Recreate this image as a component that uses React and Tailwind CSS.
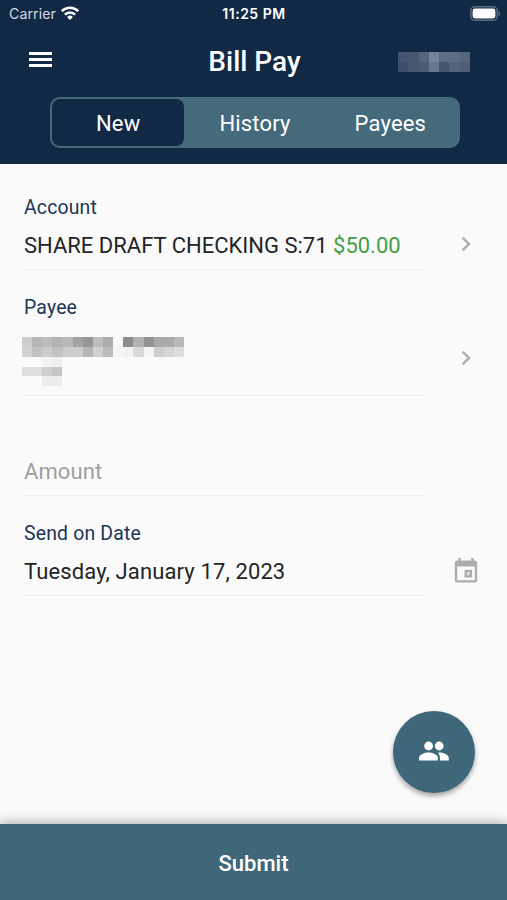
const TABS = ['New', 'History', 'Payees'];

const HEADER_MASK = [
  ['#445570', '#46566f', '#55647b', '#75839a', '#5f6d84', '#5d6b83', '#56647c'],
  ['#3c4e69', '#485872', '#4a5a73', '#68768d', '#44556f', '#53627b', '#4d5d77'],
];

const PAYEE_MASK = [
  ['#cdcdcd', '#b6b6b6', '#bcbcbc', '#b3b3b3', '#bababa', '#a2a2a2', '#969696', '#bdbdbd', '#adadad', '#f8f8f8', '#8d8d8d', '#b2b2b2', '#939393', '#aaaaaa', '#aaaaaa', '#b9b9b9'],
  ['#d2d2d2', '#c2c2c2', '#cccccc', '#c2c2c2', '#cdcdcd', '#cdcdcd', '#b5b5b5', '#d0d0d0', '#bbbbbb', '#f5f5f5', '#f2f2f2', '#dadada', '#f5f5f5', '#cecece', '#d6d6d6', '#dddddd'],
];

const ADDRESS_MASK = [
  ['#fafafa', '#fafafa', '#f2f2f2', '#f0f0f0'],
  ['#dfdfdf', '#dfdfdf', '#d0d0d0', '#c5c5c5'],
  ['#fafafa', '#fafafa', '#ececec', '#ececec'],
];

function Mask({ rows, className = '' }) {
  return (
    <div className={`flex flex-col ${className}`}>
      {rows.map((row, i) => (
        <div key={i} className="flex flex-1">
          {row.map((color, j) => (
            <span key={j} className="flex-1" style={{ backgroundColor: color }} />
          ))}
        </div>
      ))}
    </div>
  );
}

function WifiIcon() {
  return (
    <svg viewBox="0 0 18 14" className="mb-[2px] h-[14px] w-[18px]" fill="none" stroke="#fff" strokeWidth="2.6">
      <path d="M.8 5.2a11.6 11.6 0 0 1 16.4 0" />
      <path d="M3.9 8.6a7.2 7.2 0 0 1 10.2 0" />
      <path d="M9 13.9 6.1 11a4.1 4.1 0 0 1 5.8 0Z" fill="#fff" stroke="none" />
    </svg>
  );
}

function BatteryIcon() {
  return (
    <svg viewBox="0 0 31 15" className="mb-[2px] h-[15px] w-[31px]">
      <rect x="0.8" y="0.8" width="26.4" height="13.4" rx="4" fill="none" stroke="#5d6c85" strokeWidth="1.5" />
      <rect x="2.6" y="2.6" width="22.8" height="9.8" rx="2.4" fill="#fff" />
      <path d="M28.6 5.2c2 .6 2 4 0 4.6Z" fill="#66758d" />
    </svg>
  );
}

function PeopleIcon() {
  return (
    <svg viewBox="0 0 30 20" className="mb-[2px] h-5 w-[30px]" fill="currentColor">
      <circle cx="9.6" cy="5" r="4.4" />
      <circle cx="20.2" cy="5" r="4.4" />
      <path d="M0 19.4v-2.5c0-3.4 6-5.4 9.5-5.4s9.4 2 9.4 5.4v2.5Z" />
      <path d="M19.5 11.6c3.8-.2 10.3 1.8 10.3 5.3v2.5h-8.9v-2.5c0-2.3-.7-3.9-1.9-5.2Z" />
    </svg>
  );
}

function Chevron() {
  return (
    <svg viewBox="0 0 10 16" className="mr-[36.5px] h-4 w-[10px]" fill="none" stroke="#b0b0b0" strokeWidth="2.5">
      <path d="M1.6 1.7 8 8l-6.4 6.3" />
    </svg>
  );
}

function CalendarIcon() {
  return (
    <svg viewBox="0 0 24 25" className="mr-[29.5px] h-[25px] w-6">
      <path
        fill="#acacac"
        fillRule="evenodd"
        d="M4.4 0h2.4v2.6h10.4V0h2.4v2.6h1.2A2.4 2.4 0 0 1 23.2 5v17.2a2.4 2.4 0 0 1-2.4 2.4H3.2a2.4 2.4 0 0 1-2.4-2.4V5a2.4 2.4 0 0 1 2.4-2.4h1.2ZM3.2 8.6v13.6h17.6V8.6Z"
      />
      <rect x="11.6" y="13" width="5.4" height="5.4" fill="#ddd" stroke="#acacac" strokeWidth="2.2" />
    </svg>
  );
}

function Header() {
  return (
    <header className="h-[164px] bg-[#122945] text-white">
      <div className="flex h-7 items-center justify-between pr-[6px] pl-[9px] font-['Inter',sans-serif]">
        <div className="flex w-[120px] items-center gap-[5px]">
          <span className="text-[14.2px] tracking-[0.05px] text-[#d3d9e2]">Carrier</span>
          <WifiIcon />
        </div>
        <span className="pr-[2px] pb-[2px] text-[14px] font-semibold tracking-[0.5px]">11:25 PM</span>
        <div className="flex w-[120px] justify-end">
          <BatteryIcon />
        </div>
      </div>

      <div className="flex h-[69px] items-center justify-between pr-[37px] pb-[2px] pl-[29px]">
        <div className="flex w-[82px] flex-col gap-[3px] pb-[5px]">
          <span className="h-[3px] w-[23px] bg-white" />
          <span className="h-[3px] w-[23px] bg-white" />
          <span className="h-[3px] w-[23px] bg-white" />
        </div>
        <h1 className="text-[28px] font-medium">Bill Pay</h1>
        <Mask rows={HEADER_MASK} className="h-5 w-[72px]" />
      </div>

      <div className="mr-[47px] ml-[50px] grid h-[51px] grid-cols-3 rounded-[10px] border-[2px] border-[#456a7c] bg-[#456a7c]">
        {TABS.map((tab, i) => (
          <button
            key={tab}
            className={`rounded-[8px] pt-[1px] text-[22px] tracking-[0.15px] ${i === 0 ? 'mr-[3px] bg-[#122945]' : ''}`}
          >
            {tab}
          </button>
        ))}
      </div>
    </header>
  );
}

function Field({ label, icon, className, children }) {
  return (
    <div className={`flex ${className}`}>
      <div className="flex w-[402px] flex-col justify-between border-b border-[#ececec]">
        {label && <p className="pt-px text-[19.4px] leading-[24px] tracking-[0.18px] text-[#203556]">{label}</p>}
        {children}
      </div>
      <div className="flex flex-1 items-end justify-end">{icon}</div>
    </div>
  );
}

export default function App() {
  return (
    <div className="flex h-[900px] w-[507px] flex-col overflow-hidden bg-[#fafafa] font-['Roboto',sans-serif]">
      <Header />

      <main className="relative flex-1 pt-[31px] pl-6">
        <Field label="Account" className="h-[75px]" icon={<div className="pb-[18px]"><Chevron /></div>}>
          <p className="pb-[9px] text-[22px] leading-[28px] whitespace-nowrap text-[#242424]">
            SHARE DRAFT CHECKING S:71 <span className="text-[#43a047]">$50.00</span>
          </p>
        </Field>

        <Field label="Payee" className="mt-[25px] h-[101px]" icon={<div className="pb-[30.5px]"><Chevron /></div>}>
          <div className="-ml-[2px] pb-[9px]">
            <Mask rows={PAYEE_MASK} className="h-[20px] w-[162px]" />
            <Mask rows={ADDRESS_MASK} className="h-[29px] w-[40px]" />
          </div>
        </Field>

        <Field className="mt-[50px] h-[50px]">
          <p className="pt-[12px] text-[22px] leading-[28px] tracking-[0.1px] text-[#9f9f9f]">Amount</p>
        </Field>

        <Field label="Send on Date" className="mt-[25px] h-[75px]" icon={<div className="pb-[13px]"><CalendarIcon /></div>}>
          <p className="pb-[9px] text-[22px] leading-[28px] tracking-[0.12px] text-[#242424]">Tuesday, January 17, 2023</p>
        </Field>

        <button className="absolute right-8 bottom-[31px] flex size-[82px] items-center justify-center rounded-full bg-[#3e6779] text-white shadow-[0_3px_5px_rgba(0,0,0,0.35)]">
          <PeopleIcon />
        </button>
      </main>

      <button className="h-[76px] bg-[#3e6779] pt-[3px] text-[22px] font-medium text-white shadow-[0_0_12px_rgba(0,0,0,0.4)]">
        Submit
      </button>
    </div>
  );
}
